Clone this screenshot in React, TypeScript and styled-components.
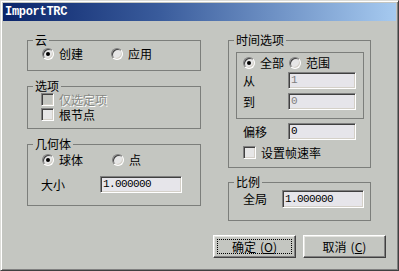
import React from "react";
import styled, { createGlobalStyle } from "styled-components";

const FACE = "#c4c6c1";

const Global = createGlobalStyle`
  html, body { margin: 0; padding: 0; background: ${FACE}; }
  body {
    font-family: "Noto Sans CJK SC", "Liberation Sans", sans-serif;
    font-size: 12px;
    color: #000;
  }
`;

const Window = styled.div`
  box-sizing: border-box;
  width: 399px;
  height: 271px;
  background: ${FACE};
  border: 1px solid;
  border-color: #dcdcd8 #404040 #404040 #dcdcd8;
  box-shadow: inset 1px 1px 0 #ffffff, inset -1px -1px 0 #808080;
  padding: 2px;
  display: flex;
  flex-direction: column;
`;

const TitleBar = styled.div`
  height: 18px;
  flex: none;
  background: linear-gradient(90deg, #0a246a 0%, #3a5c9c 40%, #a6caf0 100%);
  color: #fff;
  font-family: "Liberation Mono", "DejaVu Sans Mono", monospace;
  font-weight: bold;
  font-size: 12px;
  letter-spacing: -0.3px;
  line-height: 18px;
  padding-left: 2px;
`;

const Body = styled.div`
  flex: 1;
  display: flex;
  flex-direction: column;
  padding: 13px 10px 0 24px;
`;

const Columns = styled.div`
  display: flex;
  gap: 27px;
  align-items: flex-start;
  height: 186px;
`;

const Column = styled.div<{ $w: number }>`
  display: flex;
  flex-direction: column;
  width: ${(p) => p.$w}px;
`;

const Group = styled.fieldset<{ $mt?: number }>`
  margin: ${(p) => p.$mt ?? 0}px 0 0 0;
  padding: 0;
  min-width: 0;
  border: 1px solid #7c7e7b;
`;

const Legend = styled.legend`
  padding: 0 2px;
  margin-left: 5px;
  font-size: 12px;
  line-height: 12px;
`;

const RadioRow = styled.div<{ $pad: string }>`
  display: flex;
  align-items: center;
  height: 14px;
  padding: ${(p) => p.$pad};
`;

const RadioItem = styled.label<{ $w?: number }>`
  display: flex;
  align-items: center;
  gap: 5px;
  width: ${(p) => (p.$w ? `${p.$w}px` : "auto")};
  line-height: 14px;
  white-space: nowrap;
`;

const RadioMark = styled.span<{ $on?: boolean }>`
  box-sizing: border-box;
  flex: none;
  width: 12px;
  height: 12px;
  border-radius: 50%;
  background: #e6e6e6;
  border: 1px solid;
  border-color: #808080 #ffffff #ffffff #808080;
  box-shadow: inset 1px 1px 0 #404040, inset -1px -1px 0 #d4d0c8;
  display: flex;
  align-items: center;
  justify-content: center;
  &::after {
    content: "";
    width: 4px;
    height: 4px;
    border-radius: 50%;
    background: ${(p) => (p.$on ? "#000" : "transparent")};
  }
`;

const CheckList = styled.div<{ $pad: string }>`
  display: flex;
  flex-direction: column;
  gap: 2px;
  padding: ${(p) => p.$pad};
`;

const CheckItem = styled.label<{ $disabled?: boolean; $mt?: number }>`
  display: flex;
  align-items: center;
  gap: 5px;
  height: 13px;
  margin-top: ${(p) => p.$mt ?? 0}px;
  line-height: 13px;
  white-space: nowrap;
  color: ${(p) => (p.$disabled ? "#878985" : "#000")};
  text-shadow: ${(p) => (p.$disabled ? "1px 1px 0 #ffffff" : "none")};
`;

const CheckMark = styled.span<{ $disabled?: boolean }>`
  box-sizing: border-box;
  flex: none;
  width: 13px;
  height: 13px;
  background: ${(p) => (p.$disabled ? FACE : "#e6e6e6")};
  border: 1px solid;
  border-color: #808080 #ffffff #ffffff #808080;
  box-shadow: inset 1px 1px 0 #404040, inset -1px -1px 0 #d4d0c8;
`;

const FieldRow = styled.div<{ $mt?: number; $pad?: string; $label: number }>`
  display: grid;
  grid-template-columns: ${(p) => p.$label}px auto;
  align-items: center;
  margin-top: ${(p) => p.$mt ?? 0}px;
  padding: ${(p) => p.$pad ?? "0"};
  line-height: 14px;
`;

const Field = styled.div<{ $w: number; $h?: number; $disabled?: boolean }>`
  box-sizing: border-box;
  width: ${(p) => p.$w}px;
  height: ${(p) => p.$h ?? 17}px;
  background: #e6e5ea;
  border: 1px solid;
  border-color: #808080 #ffffff #ffffff #808080;
  box-shadow: inset 1px 1px 0 #404040, inset -1px -1px 0 #d4d0c8;
  padding-left: 2px;
  font-family: "Liberation Mono", "DejaVu Sans Mono", monospace;
  font-size: 11px;
  letter-spacing: -0.6px;
  line-height: ${(p) => (p.$h ?? 17) - 2}px;
  color: ${(p) => (p.$disabled ? "#808080" : "#000")};
`;

const GeomBody = styled.div`
  display: flex;
  flex-direction: column;
  padding: 3px 0 12px 0;
`;

const TimeBody = styled.div`
  display: flex;
  flex-direction: column;
  padding: 6px 6px 8px 7px;
`;

const RangeBox = styled.div`
  border: 1px solid #7c7e7b;
  display: flex;
  flex-direction: column;
  padding: 3px 0 8px 6px;
`;

const ScaleBody = styled.div`
  padding: 2px 0 12px 14px;
`;

const ButtonRow = styled.div`
  display: flex;
  justify-content: flex-end;
  gap: 7px;
  margin-top: 15px;
`;

const Button = styled.button<{ $focused?: boolean }>`
  position: relative;
  box-sizing: border-box;
  width: 83px;
  height: 23px;
  margin: 0;
  padding: 0;
  background: ${FACE};
  border: 1px solid;
  border-color: #ffffff #404040 #404040 #ffffff;
  box-shadow: inset -1px -1px 0 #808080, inset 1px 1px 0 #e4e4e0;
  font-family: "Noto Sans CJK SC", "Liberation Sans", sans-serif;
  font-size: 12px;
  line-height: 21px;
  color: #000;
  &::after {
    content: "";
    display: ${(p) => (p.$focused ? "block" : "none")};
    position: absolute;
    inset: 3px;
    border: 1px dotted #000;
  }
`;

const Mnemonic = styled.span`
  margin-left: 4px;
  & u {
    text-decoration-thickness: 1px;
    text-underline-offset: 1px;
  }
`;

const Radio = ({ on, w, children }: { on?: boolean; w?: number; children: React.ReactNode }) => (
  <RadioItem $w={w}>
    <RadioMark $on={on} />
    <span>{children}</span>
  </RadioItem>
);

const Check = ({ disabled, mt, children }: { disabled?: boolean; mt?: number; children: React.ReactNode }) => (
  <CheckItem $disabled={disabled} $mt={mt}>
    <CheckMark $disabled={disabled} />
    <span>{children}</span>
  </CheckItem>
);

export default function App() {
  return (
    <>
      <Global />
      <Window>
        <TitleBar>ImportTRC</TitleBar>
        <Body>
          <Columns>
            <Column $w={174}>
              <Group>
                <Legend>云</Legend>
                <RadioRow $pad="1px 0 9px 14px">
                  <Radio on w={69}>创建</Radio>
                  <Radio>应用</Radio>
                </RadioRow>
              </Group>
              <Group $mt={9}>
                <Legend>选项</Legend>
                <CheckList $pad="1px 0 7px 13px">
                  <Check disabled>仅选定项</Check>
                  <Check>根节点</Check>
                </CheckList>
              </Group>
              <Group $mt={9}>
                <Legend>几何体</Legend>
                <GeomBody>
                  <RadioRow $pad="0 0 0 14px">
                    <Radio on w={70}>球体</Radio>
                    <Radio>点</Radio>
                  </RadioRow>
                  <FieldRow $mt={9} $pad="0 0 0 13px" $label={59}>
                    <span>大小</span>
                    <Field $w={82}>1.000000</Field>
                  </FieldRow>
                </GeomBody>
              </Group>
            </Column>
            <Column $w={143}>
              <Group>
                <Legend>时间选项</Legend>
                <TimeBody>
                  <RangeBox>
                    <RadioRow $pad="0">
                      <Radio on w={46}>全部</Radio>
                      <Radio>范围</Radio>
                    </RadioRow>
                    <FieldRow $mt={2} $label={45}>
                      <span>从</span>
                      <Field $w={68} $disabled>1</Field>
                    </FieldRow>
                    <FieldRow $mt={4} $label={45}>
                      <span>到</span>
                      <Field $w={68} $disabled>0</Field>
                    </FieldRow>
                  </RangeBox>
                  <FieldRow $mt={4} $pad="0 0 0 7px" $label={45}>
                    <span>偏移</span>
                    <Field $w={68}>0</Field>
                  </FieldRow>
                  <CheckList $pad="0 0 0 7px">
                    <Check mt={6}>设置帧速率</Check>
                  </CheckList>
                </TimeBody>
              </Group>
              <Group $mt={8}>
                <Legend>比例</Legend>
                <ScaleBody>
                  <FieldRow $label={39}>
                    <span>全局</span>
                    <Field $w={82} $h={18}>1.000000</Field>
                  </FieldRow>
                </ScaleBody>
              </Group>
            </Column>
          </Columns>
          <ButtonRow>
            <Button $focused>
              确定<Mnemonic>(<u>O</u>)</Mnemonic>
            </Button>
            <Button>
              取消<Mnemonic>(<u>C</u>)</Mnemonic>
            </Button>
          </ButtonRow>
        </Body>
      </Window>
    </>
  );
}
